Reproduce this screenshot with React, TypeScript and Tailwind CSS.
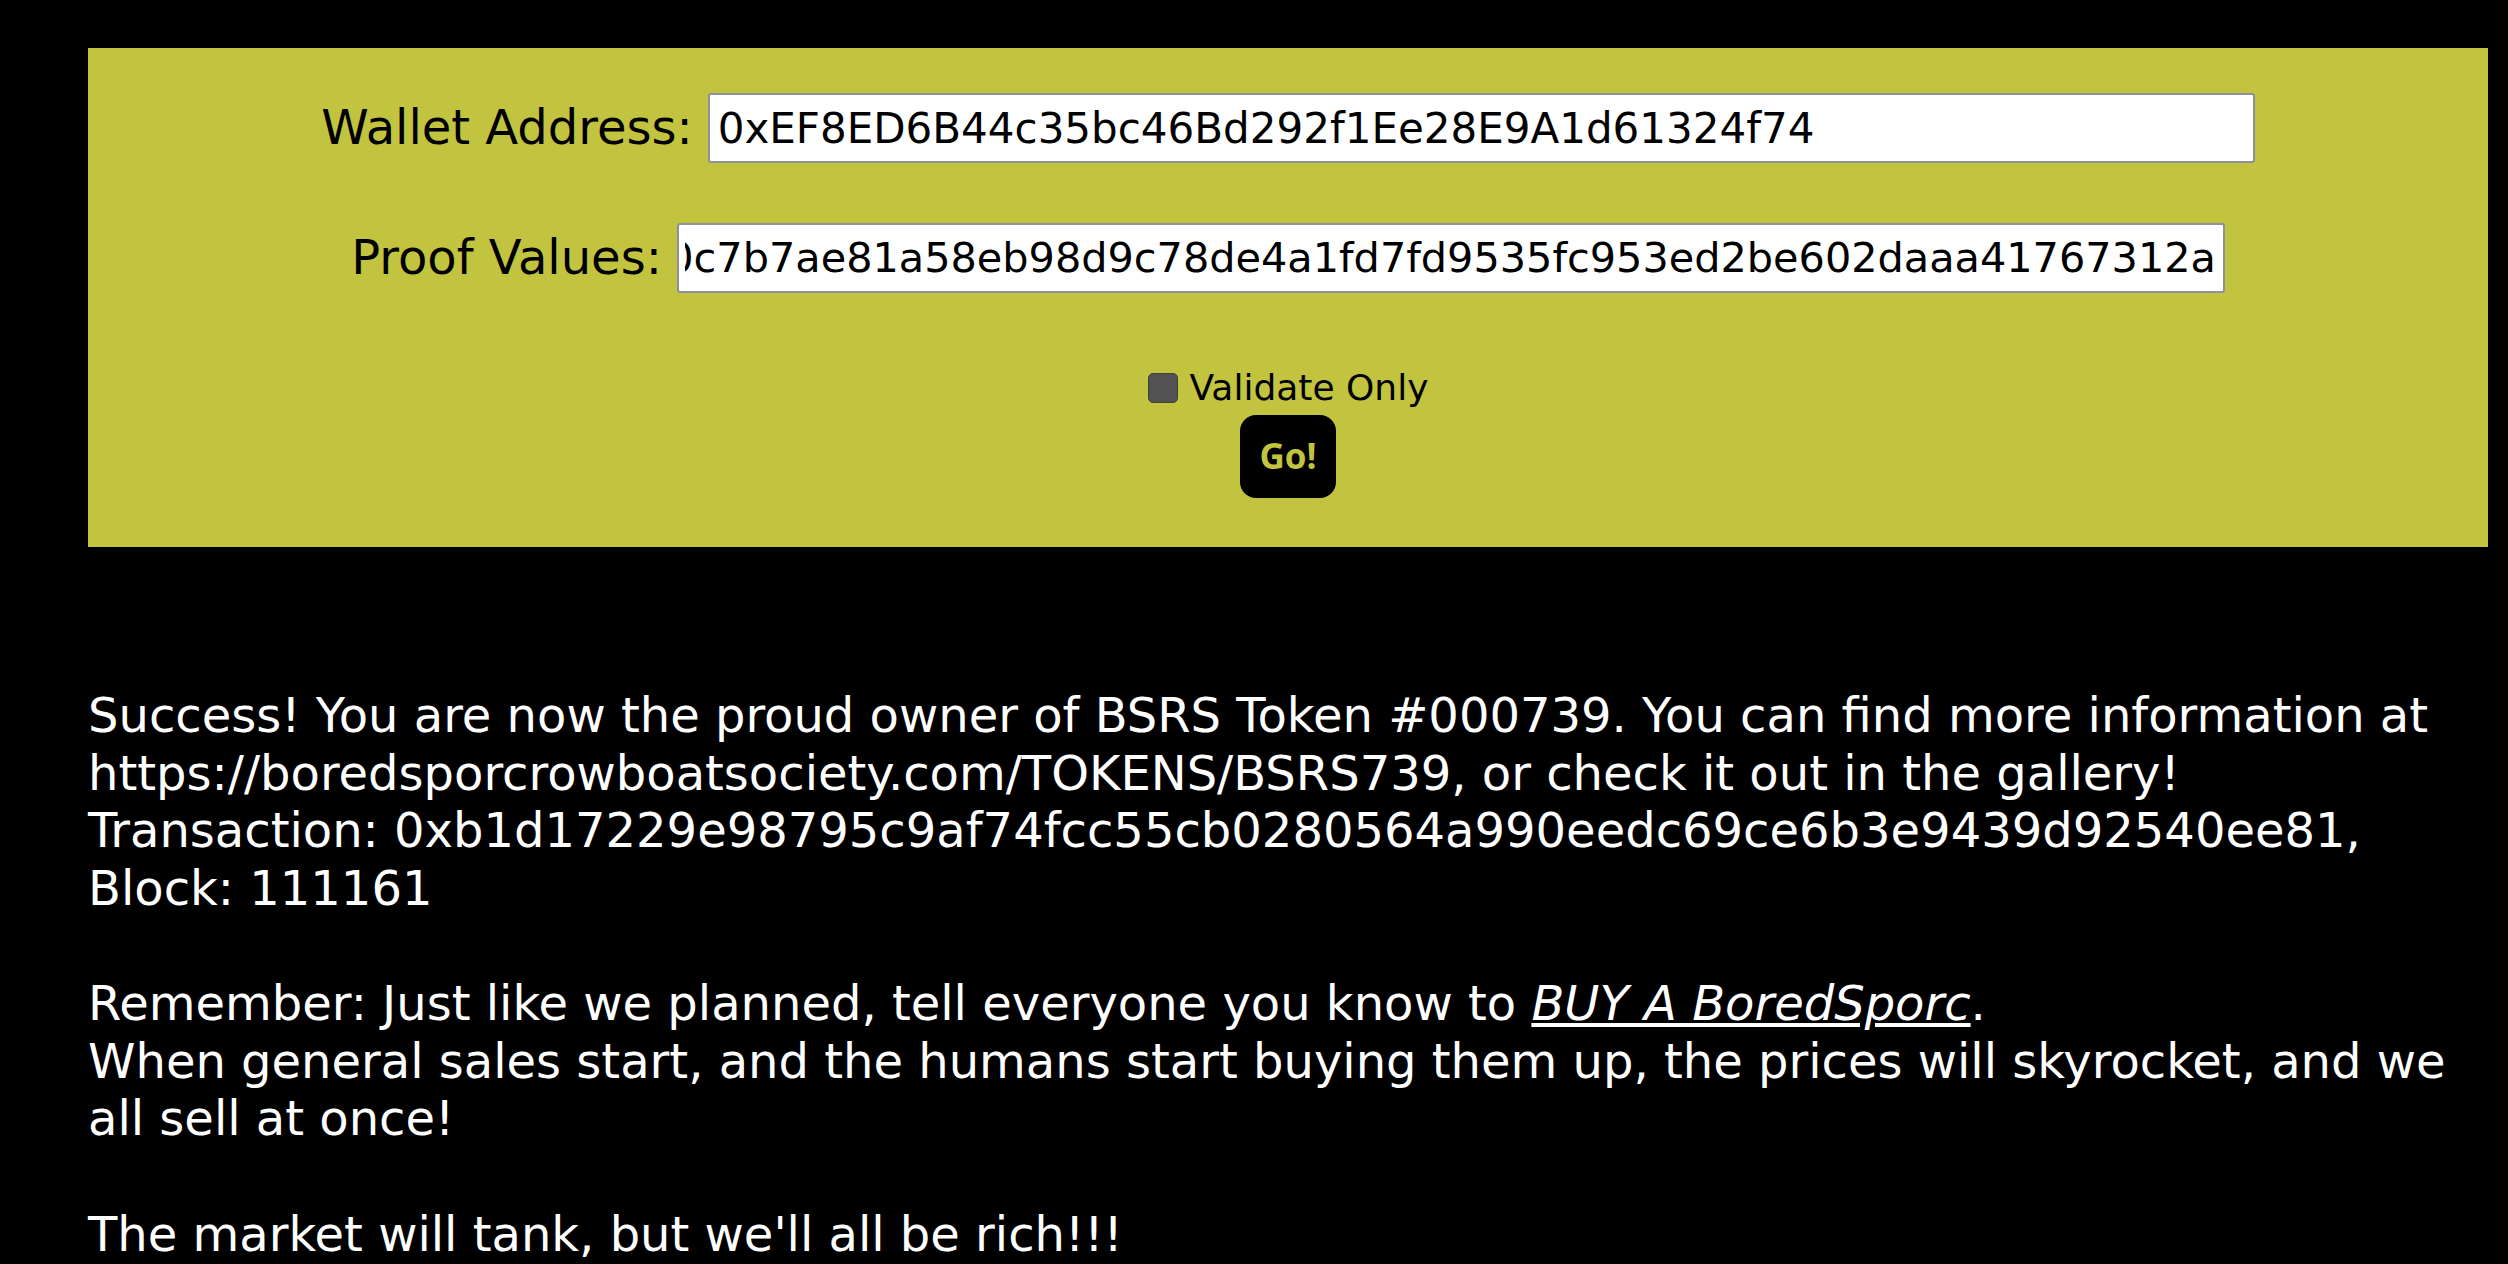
import { useLayoutEffect, useRef } from 'react';

const WALLET = '0xEF8ED6B44c35bc46Bd292f1Ee28E9A1d61324f74';
const PROOF =
  '0x4e1b9c2d7a03f5e8c6b1d29a7f40e3c5b8d1a6f2e9c07b3d5a8e1f4c6b2d9a70,0x0c7b7ae81a58eb98d9c78de4a1fd7fd9535fc953ed2be602daaa41767312a';

export default function App() {
  const proofRef = useRef<HTMLInputElement>(null);

  // the proof field shows its tail, as it does after pasting
  useLayoutEffect(() => {
    const el = proofRef.current;
    if (el) el.scrollLeft = el.scrollWidth;
  }, []);

  return (
    <div className="min-h-screen bg-black pl-[88px] pr-[20px] pt-[48px] pb-4 font-['DejaVu_Sans',sans-serif]">
      <form
        onSubmit={(e) => e.preventDefault()}
        className="flex flex-col items-center bg-[#c2c440] pt-[45px] pb-[49px]"
      >
        <div className="flex items-center gap-[15px]">
          <label className="text-[48px] leading-[1.2] text-black">Wallet Address:</label>
          <input
            type="text"
            name="wallet"
            readOnly
            value={WALLET}
            className="h-[70px] w-[1547px] rounded-[3px] border-2 border-[#8f8f9d] bg-white px-[8px] text-[42px] text-black outline-none font-['DejaVu_Sans',sans-serif]"
          />
        </div>

        <div className="mt-[60px] flex items-center gap-[15px]">
          <label className="text-[48px] leading-[1.2] text-black">Proof Values:</label>
          <input
            ref={proofRef}
            type="text"
            name="proof"
            readOnly
            value={PROOF}
            className="h-[70px] w-[1548px] rounded-[3px] border-2 border-[#8f8f9d] bg-white pl-[6px] pr-[7px] text-[41.4px] text-black outline-none font-['DejaVu_Sans',sans-serif]"
          />
        </div>

        <label className="mt-[73px] flex items-center gap-[12px] text-[36px] leading-[1.2] text-black">
          <span className="block h-[30px] w-[30px] rounded-[5px] border border-[#3e3e3e] bg-[#525252]" />
          Validate Only
        </label>

        <button
          type="submit"
          className="mt-[6px] h-[83px] w-[96px] rounded-[16px] bg-black text-[35px] font-bold text-[#c2c440] font-['Open_Sans',sans-serif]"
        >
          Go!
        </button>
      </form>

      <div className="mt-[140px] text-[48px] leading-[1.2] text-white">
        Success! You are now the proud owner of BSRS Token #000739. You can find more information at
        https://boredsporcrowboatsociety.com/TOKENS/BSRS739, or check it out in the gallery!
        <br />
        Transaction: 0xb1d17229e98795c9af74fcc55cb0280564a990eedc69ce6b3e9439d92540ee81, Block: 111161
        <br />
        <br />
        Remember: Just like we planned, tell everyone you know to{' '}
        <a href="#" className="italic underline">
          BUY A BoredSporc
        </a>
        .
        <br />
        When general sales start, and the humans start buying them up, the prices will skyrocket, and we
        all sell at once!
        <br />
        <br />
        The market will tank, but we'll all be rich!!!
      </div>
    </div>
  );
}
